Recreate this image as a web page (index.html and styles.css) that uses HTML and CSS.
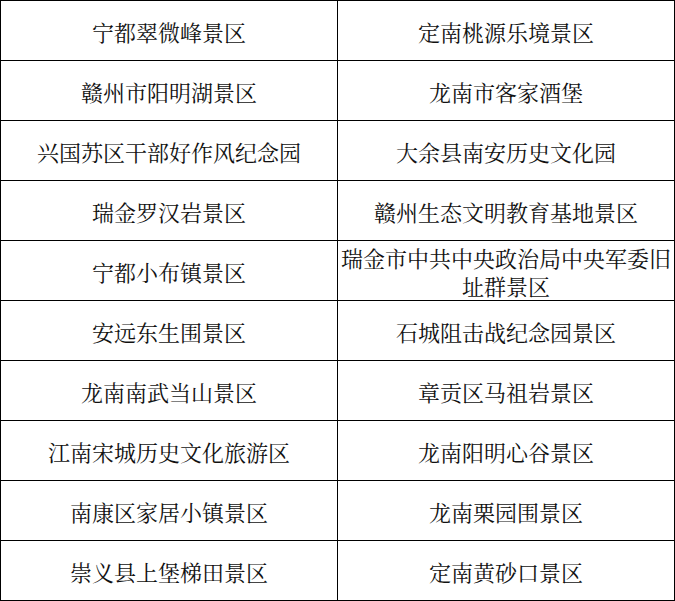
FILE: index.html
```html
<!DOCTYPE html>
<html lang="zh-CN">
<head>
<meta charset="utf-8">
<link rel="stylesheet" href="styles.css">
</head>
<body>
<div class="grid">
  <div class="cell">宁都翠微峰景区</div>
  <div class="cell">定南桃源乐境景区</div>
  <div class="cell">赣州市阳明湖景区</div>
  <div class="cell">龙南市客家酒堡</div>
  <div class="cell">兴国苏区干部好作风纪念园</div>
  <div class="cell">大余县南安历史文化园</div>
  <div class="cell">瑞金罗汉岩景区</div>
  <div class="cell">赣州生态文明教育基地景区</div>
  <div class="cell">宁都小布镇景区</div>
  <div class="cell">瑞金市中共中央政治局中央军委旧址群景区</div>
  <div class="cell">安远东生围景区</div>
  <div class="cell">石城阻击战纪念园景区</div>
  <div class="cell">龙南南武当山景区</div>
  <div class="cell">章贡区马祖岩景区</div>
  <div class="cell">江南宋城历史文化旅游区</div>
  <div class="cell">龙南阳明心谷景区</div>
  <div class="cell">南康区家居小镇景区</div>
  <div class="cell">龙南栗园围景区</div>
  <div class="cell">崇义县上堡梯田景区</div>
  <div class="cell">定南黄砂口景区</div>
</div>
</body>
</html>
```

FILE: styles.css
```css
html, body {
  margin: 0;
  padding: 0;
  background: #ffffff;
}

.grid {
  display: grid;
  grid-template-columns: 337px 337px;
  grid-auto-rows: 60px;
  width: 674px;
  border-top: 1px solid #000;
  border-left: 1px solid #000;
}

.cell {
  box-sizing: border-box;
  border-right: 1px solid #000;
  border-bottom: 1px solid #000;
  display: flex;
  align-items: center;
  justify-content: center;
  text-align: center;
  padding: 2px 3px 0 3px;
  font-family: "Noto Serif CJK SC", "Noto Sans CJK SC", sans-serif;
  font-size: 22px;
  line-height: 28px;
  color: #111;
}
```
